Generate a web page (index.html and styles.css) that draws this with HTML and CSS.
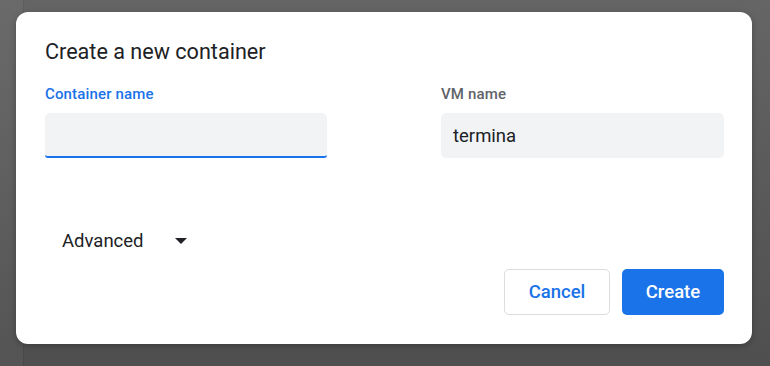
FILE: index.html
```html
<!DOCTYPE html>
<html lang="en">
  <head>
    <meta charset="UTF-8" />
    <meta name="viewport" content="width=device-width, initial-scale=1.0" />
    <title>Create a new container</title>
    <link rel="stylesheet" href="styles.css">
  </head>
  <body>
    <div class="dialog">
      <h1>Create a new container</h1>

      <div class="fields">
        <div class="field">
          <label for="container-name" class="active">Container name</label>
          <input type="text" id="container-name" class="focused" value="" />
        </div>
        <div class="field">
          <label for="vm-name">VM name</label>
          <input type="text" id="vm-name" value="termina" />
        </div>
      </div>

      <div class="advanced">
        <span>Advanced</span>
        <svg class="arrow" width="12" height="6" viewBox="0 0 12 6">
          <path d="M0 0 L12 0 L6 6 Z" fill="#202124" />
        </svg>
      </div>

      <div class="actions">
        <button type="button" class="cancel-button">Cancel</button>
        <button type="submit" class="create-button">Create</button>
      </div>
    </div>
  </body>
</html>
```

FILE: styles.css
```css
body {
  margin: 0;
  height: 366px;
  overflow: hidden;
  font-family: Roboto, "Liberation Sans", sans-serif;
  background:
    linear-gradient(to right, rgba(255, 255, 255, 0.03) 0 23px, rgba(0, 0, 0, 0.08) 23px 24px, transparent 24px),
    linear-gradient(#656565, #4f4f4f);
}

.dialog {
  box-sizing: border-box;
  width: 736px;
  height: 332px;
  margin: 12px 0 0 16px;
  padding: 26px 28px 0 29px;
  background-color: white;
  border-radius: 12px;
  box-shadow: 0 2px 6px rgba(0, 0, 0, 0.25);
}

h1 {
  margin: 0;
  font-size: 21.6px;
  font-weight: 400;
  line-height: 28px;
  color: #202124;
}

.fields {
  display: grid;
  grid-template-columns: 282px 283px;
  column-gap: 114px;
  margin-top: 18px;
}

label {
  display: block;
  margin-bottom: 9px;
  font-size: 15px;
  font-weight: 500;
  line-height: 20px;
  letter-spacing: 0.15px;
  color: #5f6368;
}

label.active {
  color: #1a73e8;
}

input[type="text"] {
  box-sizing: border-box;
  width: 100%;
  height: 45px;
  padding: 0 12px;
  border: none;
  border-radius: 5px;
  background-color: #f1f3f4;
  font-family: inherit;
  font-size: 18.5px;
  color: #202124;
  outline: none;
}

input.focused {
  border-bottom: 2px solid #1a73e8;
  border-radius: 5px 5px 3px 3px;
}

.advanced {
  display: flex;
  align-items: center;
  gap: 31px;
  margin-top: 71px;
  padding-left: 17px;
  height: 24px;
  font-size: 18.5px;
  color: #202124;
}

.actions {
  display: flex;
  justify-content: flex-end;
  gap: 12px;
  margin-top: 16px;
}

button {
  box-sizing: border-box;
  height: 46px;
  border-radius: 5px;
  font-family: inherit;
  font-size: 18.5px;
  font-weight: 500;
  cursor: pointer;
}

.cancel-button {
  width: 106px;
  background-color: white;
  border: 1px solid #dadce0;
  color: #1a73e8;
}

.create-button {
  width: 102px;
  background-color: #1a73e8;
  border: none;
  color: white;
}
```
